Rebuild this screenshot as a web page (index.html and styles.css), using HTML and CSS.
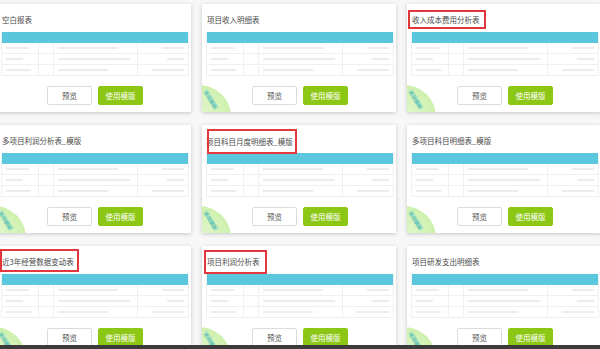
FILE: index.html
```html
<!DOCTYPE html>
<html>
<head>
    <title>模版库</title>
    <link rel="stylesheet" href="styles.css">
</head>
<body>
    <div class="viewport">
        <div class="grid">

            <div class="card">
                <div class="card-title">空白报表</div>
                <div class="sheet">
                    <div class="sheet-head"></div>
                    <div class="sheet-row"><span><i class="w23"></i></span><span></span><span><i class="w60"></i></span><span class="right"><i class="w22"></i></span></div>
                    <div class="sheet-row"><span><i class="w17"></i></span><span></span><span><i class="w72"></i></span><span class="right"><i class="w17"></i></span></div>
                    <div class="sheet-row"><span><i class="w25"></i></span><span></span><span><i class="w50"></i></span><span class="right"><i class="w32"></i></span></div>
                </div>
                <div class="actions">
                    <button class="btn btn-preview">预览</button>
                    <button class="btn btn-use">使用模版</button>
                </div>
            </div>

            <div class="card">
                <div class="card-title">项目收入明细表</div>
                <div class="sheet">
                    <div class="sheet-head"></div>
                    <div class="sheet-row"><span><i class="w23"></i></span><span></span><span><i class="w60"></i></span><span class="right"><i class="w22"></i></span></div>
                    <div class="sheet-row"><span><i class="w17"></i></span><span></span><span><i class="w72"></i></span><span class="right"><i class="w17"></i></span></div>
                    <div class="sheet-row"><span><i class="w25"></i></span><span></span><span><i class="w50"></i></span><span class="right"><i class="w32"></i></span></div>
                </div>
                <div class="actions">
                    <button class="btn btn-preview">预览</button>
                    <button class="btn btn-use">使用模版</button>
                </div>
                <div class="badge"><span>系统模版</span></div>
            </div>

            <div class="card">
                <div class="card-title">收入成本费用分析表</div>
                <div class="sheet">
                    <div class="sheet-head"></div>
                    <div class="sheet-row"><span><i class="w23"></i></span><span></span><span><i class="w60"></i></span><span class="right"><i class="w22"></i></span></div>
                    <div class="sheet-row"><span><i class="w17"></i></span><span></span><span><i class="w72"></i></span><span class="right"><i class="w17"></i></span></div>
                    <div class="sheet-row"><span><i class="w25"></i></span><span></span><span><i class="w50"></i></span><span class="right"><i class="w32"></i></span></div>
                </div>
                <div class="actions">
                    <button class="btn btn-preview">预览</button>
                    <button class="btn btn-use">使用模版</button>
                </div>
                <div class="badge"><span>系统模版</span></div>
                <div class="mark mark-a"></div>
            </div>

            <div class="card">
                <div class="card-title">多项目利润分析表_模版</div>
                <div class="sheet">
                    <div class="sheet-head"></div>
                    <div class="sheet-row"><span><i class="w23"></i></span><span></span><span><i class="w60"></i></span><span class="right"><i class="w22"></i></span></div>
                    <div class="sheet-row"><span><i class="w17"></i></span><span></span><span><i class="w72"></i></span><span class="right"><i class="w17"></i></span></div>
                    <div class="sheet-row"><span><i class="w25"></i></span><span></span><span><i class="w50"></i></span><span class="right"><i class="w32"></i></span></div>
                </div>
                <div class="actions">
                    <button class="btn btn-preview">预览</button>
                    <button class="btn btn-use">使用模版</button>
                </div>
                <div class="badge"><span>系统模版</span></div>
            </div>

            <div class="card">
                <div class="card-title shift">项目科目月度明细表_模版</div>
                <div class="sheet">
                    <div class="sheet-head"></div>
                    <div class="sheet-row"><span><i class="w23"></i></span><span></span><span><i class="w60"></i></span><span class="right"><i class="w22"></i></span></div>
                    <div class="sheet-row"><span><i class="w17"></i></span><span></span><span><i class="w72"></i></span><span class="right"><i class="w17"></i></span></div>
                    <div class="sheet-row"><span><i class="w25"></i></span><span></span><span><i class="w50"></i></span><span class="right"><i class="w32"></i></span></div>
                </div>
                <div class="actions">
                    <button class="btn btn-preview">预览</button>
                    <button class="btn btn-use">使用模版</button>
                </div>
                <div class="badge"><span>系统模版</span></div>
                <div class="mark mark-b"></div>
            </div>

            <div class="card">
                <div class="card-title">多项目科目明细表_模版</div>
                <div class="sheet">
                    <div class="sheet-head"></div>
                    <div class="sheet-row"><span><i class="w23"></i></span><span></span><span><i class="w60"></i></span><span class="right"><i class="w22"></i></span></div>
                    <div class="sheet-row"><span><i class="w17"></i></span><span></span><span><i class="w72"></i></span><span class="right"><i class="w17"></i></span></div>
                    <div class="sheet-row"><span><i class="w25"></i></span><span></span><span><i class="w50"></i></span><span class="right"><i class="w32"></i></span></div>
                </div>
                <div class="actions">
                    <button class="btn btn-preview">预览</button>
                    <button class="btn btn-use">使用模版</button>
                </div>
                <div class="badge"><span>系统模版</span></div>
            </div>

            <div class="card">
                <div class="card-title">近3年经营数据变动表</div>
                <div class="sheet">
                    <div class="sheet-head"></div>
                    <div class="sheet-row"><span><i class="w23"></i></span><span></span><span><i class="w60"></i></span><span class="right"><i class="w22"></i></span></div>
                    <div class="sheet-row"><span><i class="w17"></i></span><span></span><span><i class="w72"></i></span><span class="right"><i class="w17"></i></span></div>
                    <div class="sheet-row"><span><i class="w25"></i></span><span></span><span><i class="w50"></i></span><span class="right"><i class="w32"></i></span></div>
                </div>
                <div class="actions">
                    <button class="btn btn-preview">预览</button>
                    <button class="btn btn-use">使用模版</button>
                </div>
                <div class="badge"><span>系统模版</span></div>
                <div class="mark mark-c"></div>
            </div>

            <div class="card">
                <div class="card-title">项目利润分析表</div>
                <div class="sheet">
                    <div class="sheet-head"></div>
                    <div class="sheet-row"><span><i class="w23"></i></span><span></span><span><i class="w60"></i></span><span class="right"><i class="w22"></i></span></div>
                    <div class="sheet-row"><span><i class="w17"></i></span><span></span><span><i class="w72"></i></span><span class="right"><i class="w17"></i></span></div>
                    <div class="sheet-row"><span><i class="w25"></i></span><span></span><span><i class="w50"></i></span><span class="right"><i class="w32"></i></span></div>
                </div>
                <div class="actions">
                    <button class="btn btn-preview">预览</button>
                    <button class="btn btn-use">使用模版</button>
                </div>
                <div class="badge"><span>系统模版</span></div>
                <div class="mark mark-d"></div>
            </div>

            <div class="card">
                <div class="card-title">项目研发支出明细表</div>
                <div class="sheet">
                    <div class="sheet-head"></div>
                    <div class="sheet-row"><span><i class="w23"></i></span><span></span><span><i class="w60"></i></span><span class="right"><i class="w22"></i></span></div>
                    <div class="sheet-row"><span><i class="w17"></i></span><span></span><span><i class="w72"></i></span><span class="right"><i class="w17"></i></span></div>
                    <div class="sheet-row"><span><i class="w25"></i></span><span></span><span><i class="w50"></i></span><span class="right"><i class="w32"></i></span></div>
                </div>
                <div class="actions">
                    <button class="btn btn-preview">预览</button>
                    <button class="btn btn-use">使用模版</button>
                </div>
                <div class="badge"><span>系统模版</span></div>
            </div>

        </div>
    </div>
    <div class="bottom-bar"></div>
</body>
</html>
```

FILE: styles.css
```css
body {
    margin: 0;
    padding: 0;
    width: 600px;
    height: 349px;
    overflow: hidden;
    background-color: #f7f7f7;
    font-family: "Noto Sans CJK SC", "Noto Sans", sans-serif;
    color: #555;
}

.viewport {
    height: 345px;
    overflow: hidden;
}

.grid {
    display: grid;
    grid-template-columns: repeat(3, 194px);
    column-gap: 11px;
    row-gap: 13px;
    margin-left: -3px;
    padding-top: 4px;
}

.card {
    position: relative;
    height: 108px;
    box-sizing: border-box;
    padding: 0 2px 0 4px;
    background: #ffffff;
    box-shadow: 0 1px 4px rgba(0, 0, 0, 0.2);
    overflow: hidden;
    display: flex;
    flex-direction: column;
}

.card-title {
    height: 28px;
    padding: 2px 0 0 1px;
    box-sizing: border-box;
    display: flex;
    align-items: center;
    font-size: 7.5px;
    color: #4a4a4a;
    white-space: nowrap;
}

.card-title.shift {
    margin-left: -1px;
    padding-top: 4px;
}

.sheet {
    border-left: 1px solid #f1f1f1;
    border-right: 1px solid #f1f1f1;
}

.sheet-head {
    height: 11px;
    background: #5ac7dc;
}

.sheet-row {
    display: grid;
    grid-template-columns: 37px 15px 84px 1fr;
    height: 10px;
    border-bottom: 1px solid #f0f0f0;
}

.sheet-row span {
    display: flex;
    align-items: center;
    padding: 0 4px;
    border-right: 1px solid #f0f0f0;
}

.sheet-row span:last-child {
    border-right: none;
}

.sheet-row span.right {
    justify-content: flex-end;
}

.sheet-row i {
    display: block;
    height: 2px;
    background: #ececec;
}

.w17 { width: 17px; }
.w22 { width: 22px; }
.w23 { width: 23px; }
.w25 { width: 25px; }
.w32 { width: 32px; }
.w50 { width: 50px; }
.w60 { width: 60px; }
.w72 { width: 72px; }

.actions {
    display: flex;
    justify-content: center;
    gap: 6px;
    margin-top: 10px;
}

.btn {
    width: 45px;
    height: 19px;
    padding: 0;
    box-sizing: border-box;
    border-radius: 2px;
    font-family: "Noto Sans CJK SC", "Noto Sans", sans-serif;
    font-size: 7.5px;
    cursor: pointer;
}

.btn-preview {
    background: #ffffff;
    border: 1px solid #dcdcdc;
    color: #555;
}

.btn-use {
    background: #8cc715;
    border: 1px solid #8cc715;
    color: #ffffff;
}

.badge {
    position: absolute;
    left: -35px;
    bottom: -37px;
    width: 64px;
    height: 64px;
    border-radius: 50%;
    background: radial-gradient(circle, #e3f7cf 0%, #d2f2b4 60%, #bfea96 100%);
}

.badge span {
    position: absolute;
    left: 33px;
    top: 12px;
    width: 22px;
    height: 5px;
    line-height: 5px;
    text-align: center;
    font-size: 5px;
    color: #3fb5b0;
    background: rgba(120, 210, 200, 0.35);
    white-space: nowrap;
    transform: rotate(58deg);
}

.mark {
    position: absolute;
    border: 2px solid #e2373d;
    box-sizing: border-box;
}

.mark-a {
    left: 1px;
    top: 6px;
    width: 78px;
    height: 19px;
}

.mark-b {
    left: 5px;
    top: 4px;
    width: 90px;
    height: 25px;
}

.mark-c {
    left: 3px;
    top: 3px;
    width: 79px;
    height: 23px;
}

.mark-d {
    left: 2px;
    top: 4px;
    width: 63px;
    height: 24px;
}

.bottom-bar {
    height: 4px;
    background: #3b3b3b;
}
```
